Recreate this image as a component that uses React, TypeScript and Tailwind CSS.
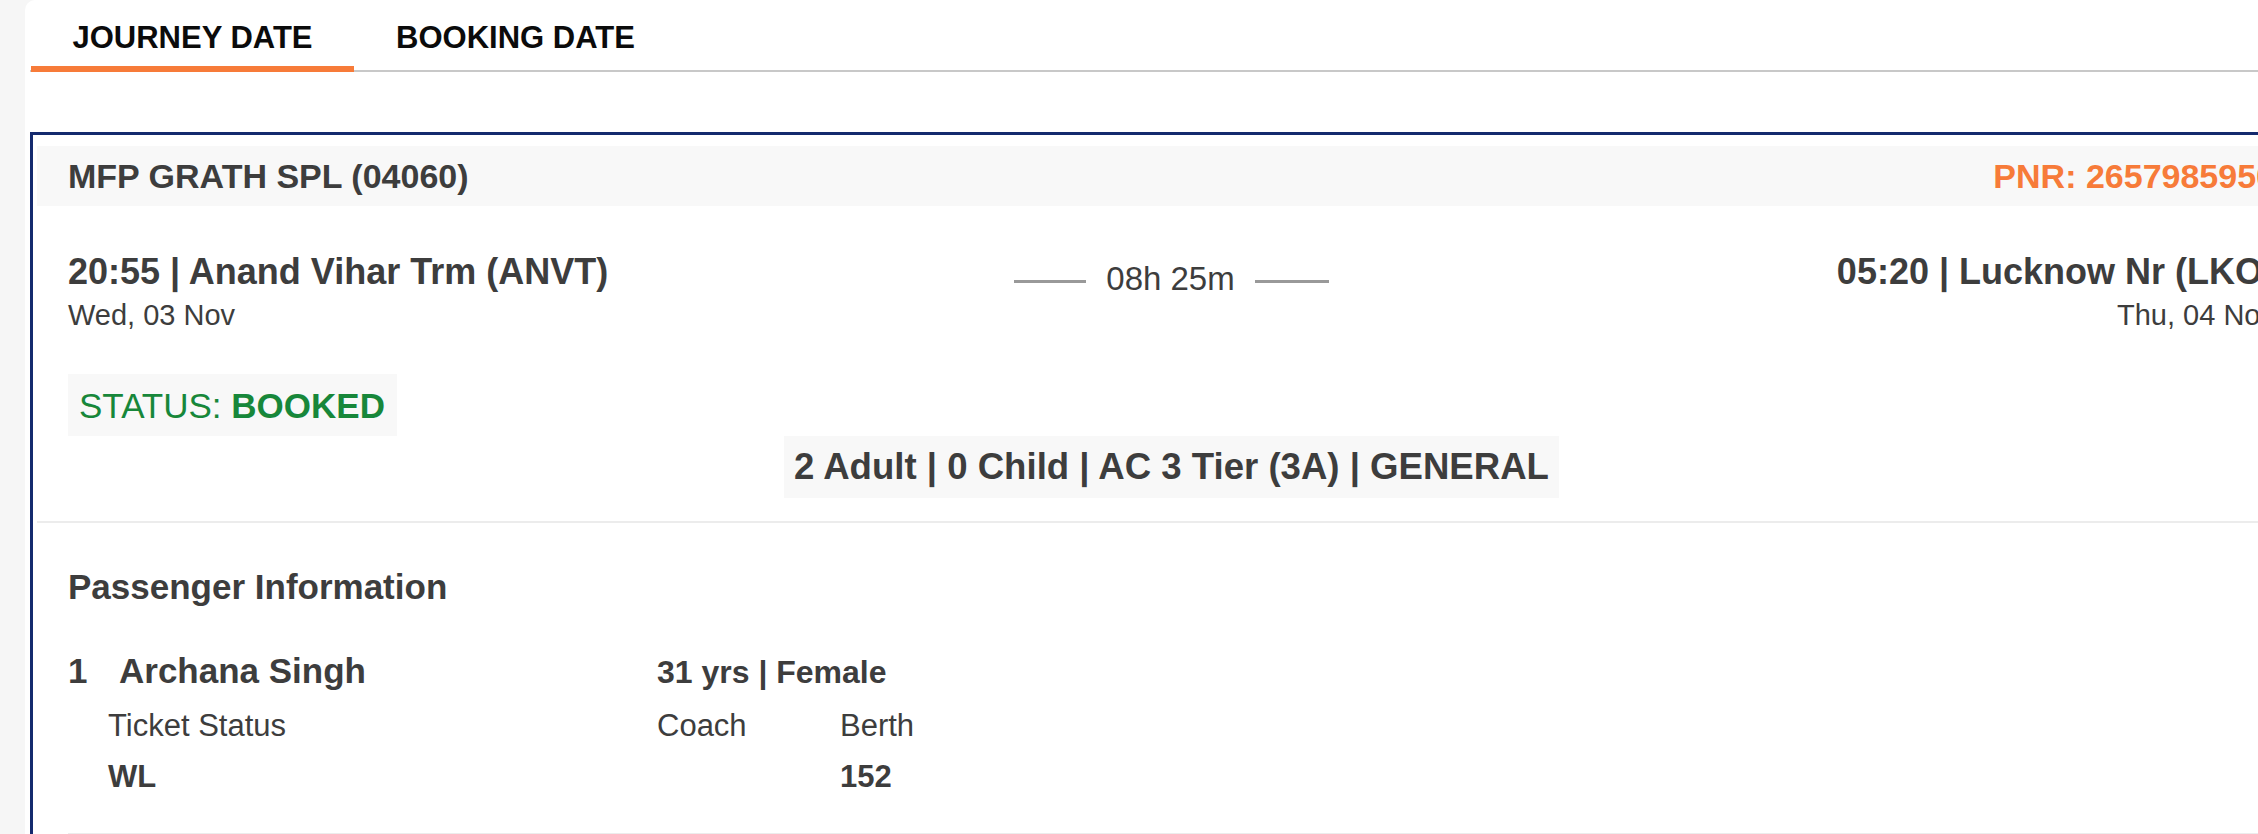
const font = "font-['Liberation_Sans',Arial,Helvetica,sans-serif]";

function Tab({ label, active }: { label: string; active?: boolean }) {
  return (
    <div
      className={
        active
          ? "-mb-[2px] w-[323px] border-b-[6px] border-[#f77b39] pt-[23px] pb-[13px] text-center text-[31px] leading-[30px] font-bold text-[#0b0b0b]"
          : "w-[323px] pt-[23px] pb-[13px] text-center text-[31px] leading-[30px] font-bold text-[#0b0b0b]"
      }
    >
      {label}
    </div>
  );
}

export default function App() {
  return (
    <div className={`h-screen w-screen overflow-hidden bg-[#f6f6f6] ${font}`}>
      <div className="ml-[25px] min-h-full w-[2400px] rounded-tl-[10px] bg-white pl-[5px]">
        {/* Tabs */}
        <div className="flex border-b-2 border-[#c8c8c8] pl-[1px]">
          <Tab label="JOURNEY DATE" active />
          <Tab label="BOOKING DATE" />
        </div>

        {/* Booking card */}
        <div className="mt-[60px] w-[2283px] border-[3px] border-[#142a6e] px-[4px] pt-[11px] text-[#3d3d3d]">
          <div className="flex h-[60px] items-center justify-between bg-[#f8f8f8] px-[31px] text-[34px] font-bold">
            <span>MFP GRATH SPL (04060)</span>
            <span className="text-[#f77b39]">PNR: 2657985950</span>
          </div>

          {/* Journey */}
          <div className="border-b-2 border-[#ececec] px-[31px] pt-[44px] pb-[23px]">
            <div className="grid grid-cols-[1fr_auto_1fr]">
              <div>
                <p className="text-[36px] leading-[43px] font-bold">20:55 | Anand Vihar Trm (ANVT)</p>
                <p className="mt-[6px] text-[29px] leading-[32px]">Wed, 03 Nov</p>
              </div>
              <div className="flex h-fit items-center gap-[20px] pt-[9px]">
                <span className="mt-[4px] h-[3px] w-[72px] bg-[#999999]" />
                <span className="text-[33px] leading-[40px]">08h 25m</span>
                <span className="mt-[4px] h-[3px] w-[74px] bg-[#999999]" />
              </div>
              <div className="text-right">
                <p className="text-[36px] leading-[43px] font-bold">05:20 | Lucknow Nr (LKO)</p>
                <p className="mt-[6px] text-[29px] leading-[32px]">Thu, 04 Nov</p>
              </div>
            </div>

            <div className="mt-[43px] flex flex-col">
              <div className="self-start bg-[#f8f8f8] pt-[12px] pr-[12px] pb-[10px] pl-[11px] text-[35px] leading-[40px] text-[#17873a]">
                STATUS: <span className="font-bold">BOOKED</span>
              </div>
              <div className="self-center bg-[#f8f8f8] px-[10px] py-[11px] text-[36.6px] leading-[40px] font-bold">
                2 Adult | 0 Child | AC 3 Tier (3A) | GENERAL
              </div>
            </div>
          </div>

          {/* Passengers */}
          <div className="px-[31px] pt-[44px] pb-[80px]">
            <h3 className="text-[35px] leading-[40px] font-bold">Passenger Information</h3>

            <div className="mt-[44px] border-b-2 border-[#ececec] pb-[38px]">
              <div className="flex items-baseline">
                <div className="flex w-[589px] text-[35px] leading-[40px] font-bold">
                  <span className="w-[51px]">1</span>
                  <span>Archana Singh</span>
                </div>
                <span className="text-[32px] leading-[40px] font-bold">31 yrs | Female</span>
              </div>
              <div className="mt-[16px] grid grid-cols-[549px_183px_auto] gap-y-[15px] pl-[40px] text-[31px] leading-[36px]">
                <span>Ticket Status</span>
                <span>Coach</span>
                <span>Berth</span>
                <span className="font-bold">WL</span>
                <span />
                <span className="font-bold">152</span>
              </div>
            </div>
          </div>
        </div>
      </div>
    </div>
  );
}
